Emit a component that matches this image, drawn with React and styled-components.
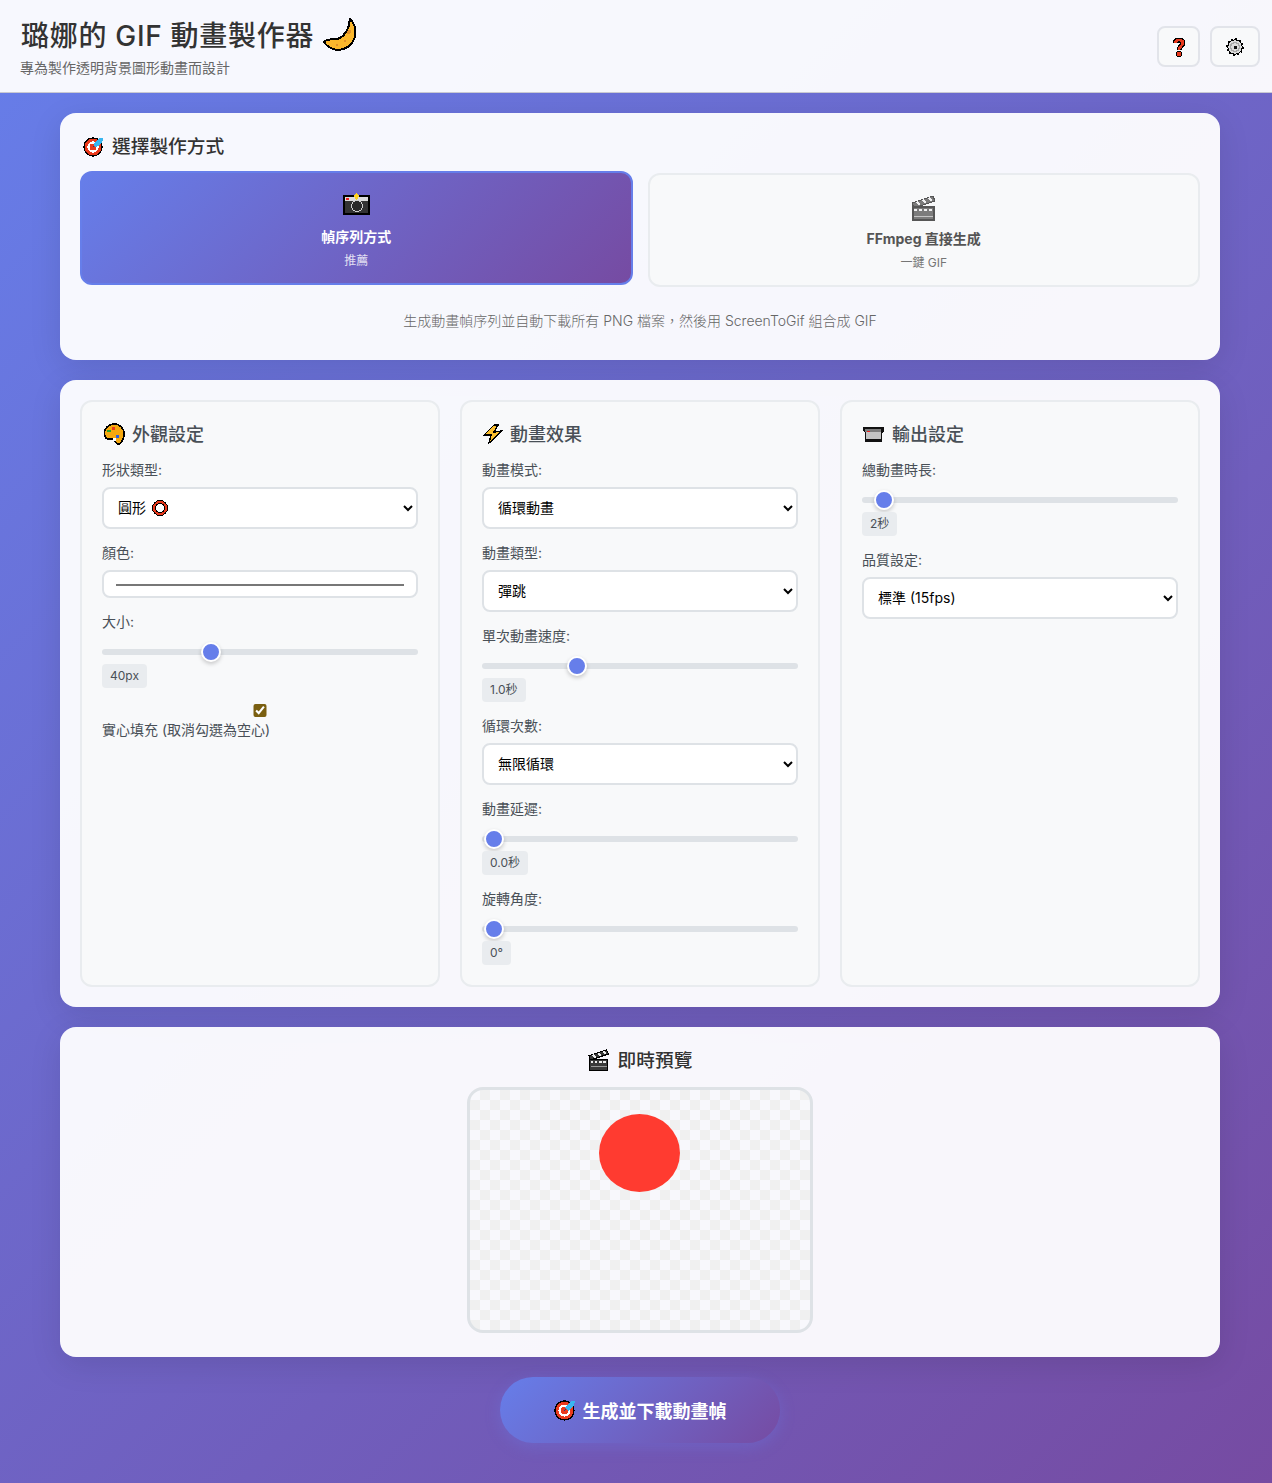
import React from 'react';
import styled, { createGlobalStyle } from 'styled-components';

const FONT = `Inter, "Noto Sans CJK TC", "Noto Sans", sans-serif`;

const GlobalStyle = createGlobalStyle`
  * {
    box-sizing: border-box;
  }
  body {
    margin: 0;
    min-width: 1280px;
    min-height: 1483px;
    font-family: ${FONT};
    background: linear-gradient(135deg, #667eea 0%, #764ba2 100%);
  }
`;

const MoonIcon = () => (
  <svg width="34" height="34" viewBox="0 0 34 34" shapeRendering="crispEdges">
    <path d="M27 1 C34 8 35 20 26 28 C18 34 7 33 1 24 C4 20 11 22 15 21 C22 18 26 11 27 1 Z" fill="#fbb72c" stroke="#000" strokeWidth="2" />
    <circle cx="26" cy="14" r="2" fill="#e0912a" />
    <circle cx="14" cy="27" r="1.6" fill="#e0912a" />
    <circle cx="22" cy="23" r="1.4" fill="#e0912a" />
  </svg>
);

const TargetIcon = ({ size = 22 }) => (
  <svg width={size} height={size} viewBox="0 0 22 22" shapeRendering="crispEdges">
    <circle cx="10.5" cy="11.5" r="9.5" fill="#ea3a1c" stroke="#000" strokeWidth="1.4" />
    <circle cx="10.5" cy="11.5" r="6" fill="#fff" />
    <circle cx="10.5" cy="11.5" r="3.6" fill="#ea3a1c" />
    <path d="M10 12 L15 7" stroke="#1b3a8a" strokeWidth="1.2" />
    <path d="M11 9 L17 2 L21 2 L20 7 L14 12 Z" fill="#38b6f0" />
  </svg>
);

const CameraIcon = () => (
  <svg width="27" height="22" viewBox="0 0 27 22" shapeRendering="crispEdges">
    <rect x="1" y="3" width="25" height="18" fill="#333" stroke="#000" strokeWidth="2" />
    <rect x="2" y="4" width="23" height="4" fill="#dcdcdc" />
    <rect x="3" y="5" width="3" height="2" fill="#e22" />
    <circle cx="14" cy="13" r="5.5" fill="#2a2a2a" stroke="#cfcfcf" strokeWidth="1" />
    <path d="M13.5 0 L16.5 3 L13.5 7 L10.5 3 Z" fill="#ffd21f" />
  </svg>
);

const ClapperIcon = ({ size = 26 }) => (
  <svg width={size} height={size} viewBox="0 0 26 26" shapeRendering="crispEdges">
    <path d="M1 8 L22 1 L24 6 L3 13 Z" fill="#3a3a3a" stroke="#000" strokeWidth="1.2" />
    <path d="M6 7 L9 10 M12 5 L15 8 M18 3 L21 6" stroke="#eee" strokeWidth="2.4" />
    <rect x="2" y="12" width="21" height="13" fill="#3a3a3a" stroke="#000" strokeWidth="1.4" />
    <path d="M3 15 H22" stroke="#eee" strokeWidth="2" strokeDasharray="3 2" />
    <path d="M3 21 H22" stroke="#aaa" strokeWidth="1" />
  </svg>
);

const PaletteIcon = () => (
  <svg width="22" height="22" viewBox="0 0 22 22" shapeRendering="crispEdges">
    <path d="M11 1 C17 1 21 5 21 11 C21 15 19 20 16 21 C13 22 12 18 10 16 C8 15 5 17 3 15 C1 13 1 9 2 7 C4 3 7 1 11 1 Z" fill="#f6a90f" stroke="#000" strokeWidth="1.6" />
    <rect x="4" y="7" width="4" height="2" fill="#2aa52a" />
    <rect x="9" y="4" width="3" height="3" fill="#ea3a1c" />
    <rect x="13" y="12" width="3" height="3" fill="#2b5fe0" />
    <rect x="10" y="15" width="3" height="3" fill="#fff" />
  </svg>
);

const BoltIcon = () => (
  <svg width="20" height="20" viewBox="0 0 20 20" shapeRendering="crispEdges">
    <path d="M11 1 L1 11 L8 11 L6 19 L19 7 L11 8 L15 1 Z" fill="#fcbf2e" stroke="#000" strokeWidth="1.4" />
  </svg>
);

const OutputIcon = () => (
  <svg width="21" height="15" viewBox="0 0 21 15" shapeRendering="crispEdges">
    <path d="M0 0 H21 V4 L19 6 V15 H2 V5 L0 4 Z" fill="#111" />
    <rect x="2" y="2" width="16" height="3" fill="#7d7d7d" />
    <rect x="3" y="5" width="15" height="7" fill="#c4c4c4" />
    <rect x="4" y="4" width="3" height="1" fill="#e22" />
  </svg>
);

const HelpIcon = () => (
  <svg width="14" height="20" viewBox="0 0 14 20" shapeRendering="crispEdges">
    <path d="M3 6 C3 2 11 2 11 6 C11 9 7 9 7 13" fill="none" stroke="#000" strokeWidth="5" />
    <path d="M3 6 C3 2 11 2 11 6 C11 9 7 9 7 13" fill="none" stroke="#e8391c" strokeWidth="2.6" />
    <circle cx="7" cy="17" r="2.6" fill="#e8391c" stroke="#000" strokeWidth="1" />
  </svg>
);

const GearIcon = () => (
  <svg width="18" height="18" viewBox="0 0 18 18" shapeRendering="crispEdges">
    <circle cx="9" cy="9" r="7.2" fill="#dcdcdc" stroke="#000" strokeWidth="1" />
    <circle cx="9" cy="9" r="8" fill="none" stroke="#000" strokeWidth="1.4" strokeDasharray="2 2.2" />
    <circle cx="9" cy="9" r="4.4" fill="none" stroke="#a8a8a8" strokeWidth="1.6" />
    <rect x="7.5" y="7.5" width="3" height="3" fill="#111" />
  </svg>
);

const RingIcon = () => (
  <svg width="16" height="16" viewBox="0 0 16 16" shapeRendering="crispEdges">
    <circle cx="8" cy="8" r="6" fill="#fff" stroke="#000" strokeWidth="4" />
    <circle cx="8" cy="8" r="6" fill="none" stroke="#e8391c" strokeWidth="2" />
  </svg>
);

const Page = styled.div`
  width: 1280px;
`;

const Header = styled.header`
  height: 93px;
  padding: 15px 20px 0;
  display: flex;
  justify-content: space-between;
  background: rgba(255, 255, 255, 0.95);
  border-bottom: 1px solid #c9c9d2;
`;

const TitleRow = styled.h1`
  margin: 0;
  display: flex;
  align-items: center;
  height: 38px;
  padding-left: 1px;
  font-size: 28px;
  font-weight: 500;
  letter-spacing: 0.7px;
  color: #333;
  white-space: pre;
  svg {
    margin: 2px 0 0 9px;
  }
`;

const Subtitle = styled.p`
  margin: 5px 0 0;
  font-size: 14px;
  line-height: 20px;
  color: #666;
`;

const HeaderActions = styled.div`
  display: flex;
  gap: 10px;
  padding-top: 11px;
`;

const IconButton = styled.button`
  width: ${(props) => props.$w}px;
  height: 41px;
  display: flex;
  align-items: center;
  justify-content: center;
  padding: 0;
  background: #f8f9fa;
  border: 2px solid #e2e4ea;
  border-radius: 8px;
`;

const Main = styled.main`
  padding: 20px 60px 40px;
  display: flex;
  flex-direction: column;
  gap: 20px;
`;

const Panel = styled.section`
  padding: 20px;
  background: rgba(255, 255, 255, 0.95);
  border-radius: 16px;
  box-shadow: 0 8px 32px rgba(0, 0, 0, 0.1);
`;

const PanelTitle = styled.h3`
  margin: 0 0 14px;
  display: flex;
  align-items: center;
  justify-content: ${(props) => (props.$center ? 'center' : 'flex-start')};
  gap: 8px;
  height: 26px;
  padding: 0 0 4px ${(props) => (props.$center ? 0 : 3)}px;
  font-size: 18.72px;
  font-weight: 500;
  color: #333;
  svg {
    margin-top: 4px;
  }
`;

const ModeGrid = styled.div`
  display: grid;
  grid-template-columns: 1fr 1fr;
  gap: 15px;
`;

const ModeCard = styled.div`
  height: 114px;
  padding-top: 20px;
  display: flex;
  flex-direction: column;
  align-items: center;
  text-align: center;
  border: 2px solid ${(props) => (props.$active ? '#667eea' : '#e9ecef')};
  border-radius: 12px;
  background: ${(props) => (props.$active ? 'linear-gradient(135deg, #667eea 0%, #764ba2 100%)' : '#f8f9fa')};
  color: ${(props) => (props.$active ? '#fff' : '#555')};
  transform: ${(props) => (props.$active ? 'translateY(-2px)' : 'none')};
`;

const ModeIcon = styled.div`
  height: 26px;
  display: flex;
  align-items: flex-start;
  opacity: ${(props) => (props.$muted ? 0.65 : 1)};
`;

const ModeName = styled.div`
  margin-top: 8px;
  font-size: 14px;
  line-height: 20px;
  font-weight: 700;
`;

const ModeSub = styled.div`
  margin-top: 4px;
  font-size: 12px;
  line-height: 20px;
  opacity: 0.8;
`;

const ModeNote = styled.p`
  margin: 24px 0 9px;
  font-size: 14px;
  line-height: 20px;
  font-weight: 300;
  color: #666;
  text-align: center;
`;

const SettingsGrid = styled.div`
  display: grid;
  grid-template-columns: repeat(3, 1fr);
  gap: 20px;
`;

const SettingsCard = styled.div`
  padding: 20px;
  background: #f8f9fa;
  border: 2px solid #e9ecef;
  border-radius: 12px;
`;

const CardTitle = styled.h3`
  margin: 0 0 14px;
  display: flex;
  align-items: center;
  gap: ${(props) => props.$gap || 8}px;
  height: 24px;
  padding: 0 0 2px 1px;
  font-size: 18px;
  font-weight: 500;
  color: #495057;
  svg {
    margin-top: 2px;
  }
`;

const Group = styled.div`
  margin-bottom: 14px;
  &:last-child {
    margin-bottom: 0;
  }
`;

const Label = styled.label`
  display: block;
  margin-bottom: ${(props) => (props.$flat ? 0 : 7)}px;
  font-size: 14px;
  line-height: 20px;
  color: #495057;
`;

const SelectWrap = styled.div`
  position: relative;
`;

const SelectBadge = styled.span`
  position: absolute;
  left: 50px;
  top: 13px;
  line-height: 0;
`;

const Select = styled.select`
  display: block;
  width: 100%;
  height: 42px;
  padding: 0 10px 2px;
  background: #fff;
  border: 2px solid #dee2e6;
  border-radius: 8px;
  font-family: ${FONT};
  font-size: 14px;
  color: #000;
`;

const ColorInput = styled.input`
  display: block;
  width: 100%;
  height: 27px;
  padding: 12px 10px;
  background: #fff;
  border: 2px solid #dee2e6;
  border-radius: 8px;
`;

const Range = styled.input`
  display: block;
  width: 100%;
  height: 6px;
  margin: 17px 0 9px;
  padding: 0 2px;
  appearance: none;
  background: #dee2e6;
  border-radius: 3px;
  outline: none;
  &::-webkit-slider-thumb {
    appearance: none;
    width: 20px;
    height: 20px;
    background: #667eea;
    border: 2px solid #fff;
    border-radius: 50%;
    box-shadow: 0 2px 4px rgba(0, 0, 0, 0.2);
  }
`;

const ValueTag = styled.span`
  display: inline-block;
  height: 24px;
  padding: 0 8px;
  background: #e9ecef;
  border-radius: 4px;
  font-size: 12px;
  line-height: 24px;
  color: #495057;
  vertical-align: top;
`;

const SliderValue = styled.div`
  height: 24px;
`;

const Checkbox = styled.input`
  display: block;
  width: 100%;
  height: 13px;
  margin: 16px 0 3px;
  accent-color: #7a5f10;
`;

const PreviewBox = styled.div`
  position: relative;
  width: 346px;
  height: 246px;
  margin: 0 auto 4px;
  border: 3px solid #dee2e6;
  border-radius: 16px;
  overflow: hidden;
  background-color: #f8f8fc;
  background-image:
    linear-gradient(45deg, #f0f0f0 25%, transparent 25%),
    linear-gradient(-45deg, #f0f0f0 25%, transparent 25%),
    linear-gradient(45deg, transparent 75%, #f0f0f0 75%),
    linear-gradient(-45deg, transparent 75%, #f0f0f0 75%);
  background-size: 20px 20px;
  background-position: 0 0, 0 10px, 10px -10px, -10px 0;
`;

const PreviewShape = styled.div`
  position: absolute;
  left: 129px;
  top: 24px;
  width: 81px;
  height: 78px;
  border-radius: 50%;
  background: #ff3b30;
`;

const Actions = styled.div`
  display: flex;
  justify-content: center;
`;

const GenerateButton = styled.button`
  width: 280px;
  height: 66px;
  display: flex;
  align-items: center;
  justify-content: center;
  gap: 7px;
  border: 0;
  border-radius: 33px;
  background: linear-gradient(135deg, #667eea 0%, #764ba2 100%);
  box-shadow: 0 4px 15px rgba(102, 126, 234, 0.3);
  font-family: ${FONT};
  font-size: 18px;
  font-weight: 700;
  color: #fff;
`;

const Slider = ({ min, max, step = 1, value, text }) => (
  <>
    <Range type="range" min={min} max={max} step={step} defaultValue={value} />
    <SliderValue>
      <ValueTag>{text}</ValueTag>
    </SliderValue>
  </>
);

const App = () => {
  return (
    <Page>
      <GlobalStyle />
      <Header>
        <div>
          <TitleRow>
            璐娜的 GIF 動畫製作器
            <MoonIcon />
          </TitleRow>
          <Subtitle>專為製作透明背景圖形動畫而設計</Subtitle>
        </div>
        <HeaderActions>
          <IconButton $w={43}>
            <HelpIcon />
          </IconButton>
          <IconButton $w={50}>
            <GearIcon />
          </IconButton>
        </HeaderActions>
      </Header>
      <Main>
        <Panel>
          <PanelTitle>
            <TargetIcon size={21} />
            選擇製作方式
          </PanelTitle>
          <ModeGrid>
            <ModeCard $active>
              <ModeIcon>
                <CameraIcon />
              </ModeIcon>
              <ModeName>幀序列方式</ModeName>
              <ModeSub>推薦</ModeSub>
            </ModeCard>
            <ModeCard>
              <ModeIcon $muted>
                <ClapperIcon />
              </ModeIcon>
              <ModeName>FFmpeg 直接生成</ModeName>
              <ModeSub>一鍵 GIF</ModeSub>
            </ModeCard>
          </ModeGrid>
          <ModeNote>生成動畫幀序列並自動下載所有 PNG 檔案，然後用 ScreenToGif 組合成 GIF</ModeNote>
        </Panel>
        <Panel>
          <SettingsGrid>
            <SettingsCard>
              <CardTitle $gap={7}>
                <PaletteIcon />
                外觀設定
              </CardTitle>
              <Group>
                <Label>形狀類型:</Label>
                <SelectWrap>
                  <Select defaultValue="circle">
                    <option value="circle">圓形</option>
                  </Select>
                  <SelectBadge>
                    <RingIcon />
                  </SelectBadge>
                </SelectWrap>
              </Group>
              <Group>
                <Label>顏色:</Label>
                <ColorInput type="color" defaultValue="#ff3b30" />
              </Group>
              <Group>
                <Label>大小:</Label>
                <Slider min={10} max={100} value={40} text="40px" />
              </Group>
              <Group>
                <Checkbox type="checkbox" defaultChecked />
                <Label $flat>實心填充 (取消勾選為空心)</Label>
              </Group>
            </SettingsCard>
            <SettingsCard>
              <CardTitle $gap={7}>
                <BoltIcon />
                動畫效果
              </CardTitle>
              <Group>
                <Label>動畫模式:</Label>
                <Select>
                  <option>循環動畫</option>
                </Select>
              </Group>
              <Group>
                <Label>動畫類型:</Label>
                <Select>
                  <option>彈跳</option>
                </Select>
              </Group>
              <Group>
                <Label>單次動畫速度:</Label>
                <Slider min={0.2} max={3} step={0.1} value={1} text="1.0秒" />
              </Group>
              <Group>
                <Label>循環次數:</Label>
                <Select>
                  <option>無限循環</option>
                </Select>
              </Group>
              <Group>
                <Label>動畫延遲:</Label>
                <Slider min={0} max={5} step={0.1} value={0} text="0.0秒" />
              </Group>
              <Group>
                <Label>旋轉角度:</Label>
                <Slider min={0} max={360} value={0} text="0°" />
              </Group>
            </SettingsCard>
            <SettingsCard>
              <CardTitle>
                <OutputIcon />
                輸出設定
              </CardTitle>
              <Group>
                <Label>總動畫時長:</Label>
                <Slider min={1} max={30} value={2} text="2秒" />
              </Group>
              <Group>
                <Label>品質設定:</Label>
                <Select>
                  <option>標準 (15fps)</option>
                </Select>
              </Group>
            </SettingsCard>
          </SettingsGrid>
        </Panel>
        <Panel>
          <PanelTitle $center>
            <ClapperIcon size={22} />
            即時預覽
          </PanelTitle>
          <PreviewBox>
            <PreviewShape />
          </PreviewBox>
        </Panel>
        <Actions>
          <GenerateButton>
            <TargetIcon />
            生成並下載動畫幀
          </GenerateButton>
        </Actions>
      </Main>
    </Page>
  );
};

export default App;
